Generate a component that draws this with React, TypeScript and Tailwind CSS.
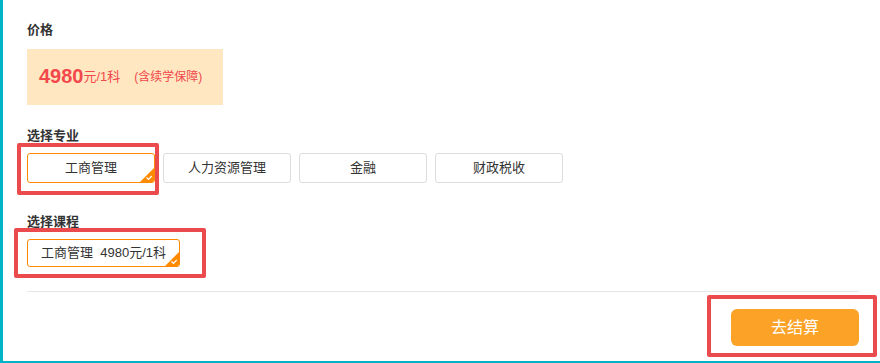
import React from "react";

const majors = ["工商管理", "人力资源管理", "金融", "财政税收"];

function CornerCheck() {
  return (
    <svg className="absolute right-0 bottom-0" width="14" height="14" viewBox="0 0 14 14">
      <path d="M14 0 L14 14 L0 14 Z" fill="#ff8a00" />
      <path d="M6.5 9.5 L8.5 11.3 L11.8 8" stroke="#fff" strokeWidth="1.2" fill="none" />
    </svg>
  );
}

export default function App() {
  const font = { fontFamily: '"Liberation Sans", "Noto Sans CJK SC", sans-serif' };

  return (
    <div
      className="relative w-[880px] h-[363px] overflow-hidden bg-white border-l-[3px] border-b-2 border-[#00b4c5] border-t-0 border-r-0 text-[#333]"
      style={font}
    >
      <div className="pl-6 pr-[21px] pt-[21px]">
        <div className="text-[13px] leading-[18px] font-bold">价格</div>

        <div className="mt-[10px] w-[196px] h-[56px] bg-[#ffe7c1] flex items-center pl-3 pb-[3px] text-[#f2474b]">
          <span className="text-[20px] font-bold leading-none">4980</span>
          <span className="text-[13px] mt-[3px]">元/1科</span>
          <span className="text-[12px] ml-[14px] mt-[3px]">(含续学保障)</span>
        </div>

        <div className="mt-[22px] text-[13px] leading-[18px] font-bold">选择专业</div>
        <div className="mt-[8px] flex gap-2">
          {majors.map((m, i) => (
            <div
              key={m}
              className={
                i === 0
                  ? "relative w-[128px] h-[30px] flex items-center justify-center text-[13px] rounded-[3px] border border-[#ff8a00] overflow-hidden"
                  : "relative w-[128px] h-[30px] flex items-center justify-center text-[13px] rounded-[3px] border border-[#dcdcdc]"
              }
            >
              {m}
              {i === 0 && <CornerCheck />}
            </div>
          ))}
        </div>

        <div className="mt-[30px] text-[13px] leading-[18px] font-bold">选择课程</div>
        <div className="mt-[8px] flex">
          <div className="relative w-[153px] h-[28px] flex items-center justify-center text-[13px] rounded-[3px] border border-[#ff8a00] overflow-hidden whitespace-pre">
            {"工商管理  4980元/1科"}
            <CornerCheck />
          </div>
        </div>

        <div className="mt-[24px] h-px bg-[#e6e6e6]" />

        <div className="mt-[17px] flex justify-end">
          <button className="w-[128px] h-[37px] rounded-[6px] bg-[#fca227] text-white text-[16px] flex items-center justify-center">
            去结算
          </button>
        </div>
      </div>

      {/* annotation frames */}
      <div className="absolute left-[14px] top-[143px] w-[142px] h-[52px] border-4 border-[#ec4b4d] rounded-[2px]" />
      <div className="absolute left-[11px] top-[228px] w-[192px] h-[50px] border-4 border-[#ec4b4d] rounded-[2px]" />
      <div className="absolute left-[704px] top-[295px] w-[170px] h-[62px] border-4 border-[#ec4b4d] rounded-[2px]" />
    </div>
  );
}
